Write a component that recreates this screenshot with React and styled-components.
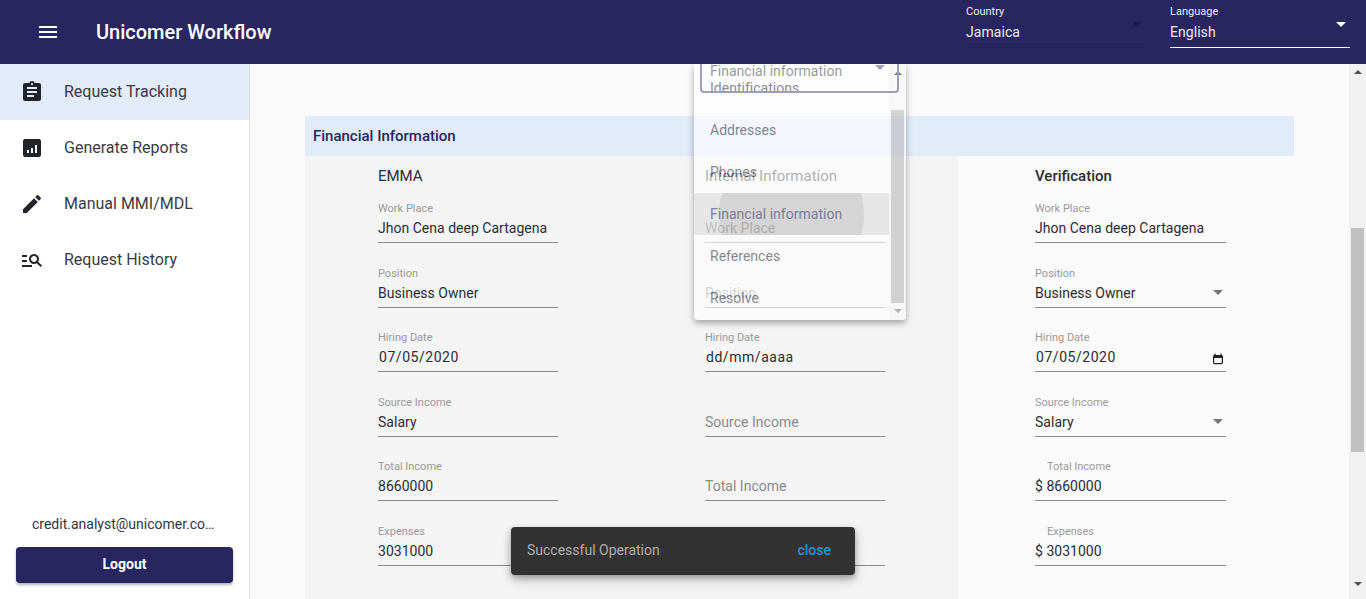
import React from 'react';
import styled, { createGlobalStyle } from 'styled-components';
import { MdAssignment, MdEdit, MdManageSearch, MdMenu } from 'react-icons/md';

const Global = createGlobalStyle`
  html, body { margin: 0; padding: 0; height: 100%; overflow: hidden; }
  body { font-family: Roboto, "Liberation Sans", sans-serif; background: #fafafa; color: rgba(0,0,0,.87); }
  * { box-sizing: border-box; }
`;

const Page = styled.div`position: relative; width: 1366px; height: 599px; display: flex; flex-direction: column; overflow: hidden;`;
const AppBar = styled.header`position: relative; z-index: 5; height: 64px; flex: none; background: #282560; color: #fff; display: flex; align-items: center; padding: 0 16px 0 36px;`;
const MenuButton = styled.span`display: flex; width: 24px; height: 24px; font-size: 24px; margin-right: 36px;`;
const Title = styled.h1`margin: 0; font-size: 20px; font-weight: 500; flex: 1;`;
const HeaderSelect = styled.div`position: relative; width: ${p => p.$w}px; margin-left: ${p => p.$ml}px; height: 48px; margin-top: -17px; border-bottom: 1px ${p => p.$light ? 'solid #fff' : 'dotted #1d1a4e'}; color: #ebebf3;`;
const HeaderLabel = styled.div`font-size: 11px; line-height: 13px; padding-top: 5px;`;
const HeaderValue = styled.div`font-size: 14px; line-height: 20px; margin-top: 4px; letter-spacing: .05px;`;
const Caret = styled.i`
  position: absolute; right: ${p => p.$right}px; top: ${p => p.$top}px; width: 0; height: 0;
  border-left: 5px solid transparent; border-right: 5px solid transparent; border-top: 5px solid ${p => p.$color};
`;

const Body = styled.div`flex: 1; min-height: 0; display: flex;`;
const Sidebar = styled.aside`width: 250px; flex: none; background: #fff; border-right: 1px solid #e0e0e0; display: flex; flex-direction: column;`;
const NavItem = styled.div`height: 56px; display: flex; align-items: center; padding-left: 20px; gap: 20px; font-size: 16px; color: #3a3a44; background: ${p => p.$active ? '#e1ebfa' : 'transparent'}; svg { color: #23232b; flex: none; }`;
const NavText = styled.span`padding-bottom: 2px;`;
const SideFoot = styled.div`margin-top: auto; padding: 0 16px 16px;`;
const Email = styled.div`font-size: 14px; line-height: 20px; color: #33333f; padding: 0 16px; margin-bottom: 13px; white-space: nowrap; overflow: hidden; text-overflow: ellipsis;`;
const Logout = styled.button`display: block; width: 100%; height: 36px; padding: 0 0 2px; border: 0; border-radius: 4px; background: #282560; color: #fff; font: 700 14px Roboto, sans-serif; box-shadow: 0 2px 3px rgba(0,0,0,.3);`;

const Main = styled.main`flex: 1; min-width: 0; padding: 52px 0 0 55px; overflow: hidden; background: #fafafa;`;
const Section = styled.section`width: 989px;`;
const SectionHead = styled.div`height: 40px; background: #e1ebfa; display: flex; align-items: center; padding-left: 8px; font-size: 15px; font-weight: 500; color: #282560;`;
const Columns = styled.div`display: grid; grid-template-columns: 653px 336px;`;
const GrayPanel = styled.div`background: #f4f4f4; display: grid; grid-template-columns: 327px 326px; padding: 0 0 60px 73px;`;
const WhitePanel = styled.div`padding-left: 77px;`;
const Column = styled.div`width: ${p => p.$w}px; display: flex; flex-direction: column; gap: 22.6px;`;
const Heading = styled.div`height: 22px; margin-top: 9px; margin-bottom: -8.6px; font-size: 15px; line-height: 22px; font-weight: ${p => p.$bold ? 500 : 400}; color: #2c2c34;`;
const Field = styled.div`position: relative; height: 42px; border-bottom: 1px solid #8c8c8c;`;
const FieldLabel = styled.div`height: 15px; padding-top: 1px; padding-left: ${p => p.$indent ? 12 : 0}px; font-size: 11px; line-height: 14px; color: #9a9a9a;`;
const FieldValue = styled.div`font-size: 14px; line-height: 20px; margin-top: 2px; white-space: nowrap; letter-spacing: ${p => p.$date ? '.54px' : '.02px'}; padding-left: ${p => p.$date ? 1 : 0}px; color: ${p => p.$muted ? '#8b8b8b' : '#2c2c34'};`;
const CalendarIcon = styled.svg`position: absolute; right: 2px; top: 23px;`;

const Popup = styled.div`position: absolute; z-index: 3; left: 694px; top: 64px; width: 212px; height: 256px; background: #fff; opacity: .62; overflow: hidden; border-radius: 0 0 4px 4px; box-shadow: 0 3px 6px rgba(0,0,0,.55); display: flex;`;
const MenuList = styled.div`width: 195px; flex: none; padding-top: 3px;`;
const MenuItem = styled.div`position: relative; overflow: hidden; height: 42px; display: flex; align-items: center; padding-left: 16px; font-size: 14px; letter-spacing: .02px; color: ${p => p.$active ? '#37376c' : '#46464c'}; background: ${p => p.$active ? 'rgba(0,0,0,.13)' : 'transparent'};`;
const Ripple = styled.span`position: absolute; left: 25px; top: -51px; width: 145px; height: 145px; border-radius: 50%; background: rgba(0,0,0,.12);`;
const MiniBar = styled.div`width: 17px; flex: none; background: #f8f8f8; display: flex; flex-direction: column; align-items: center;`;
const MiniThumb = styled.div`width: 13px; height: 193px; margin-top: 35px; background: #bdbdbd;`;
const OutlineBox = styled.div`position: absolute; left: 6px; top: -20px; width: 199px; height: 49px; border: 2px solid #69659b; border-radius: 4px; padding: 15px 0 0 8px; font-size: 14px; line-height: 20px; letter-spacing: .02px; color: #5f5f66;`;
const Up = styled.i`width: 0; height: 0; border-left: 4px solid transparent; border-right: 4px solid transparent; border-bottom: 4px solid ${p => p.$color}; margin-top: ${p => p.$mt}px;`;
const Down = styled.i`width: 0; height: 0; border-left: 4px solid transparent; border-right: 4px solid transparent; border-top: 4px solid ${p => p.$color}; margin-top: ${p => p.$mt}px;`;

const PageBar = styled.div`width: 17px; flex: none; background: #f1f1f1; display: flex; flex-direction: column; align-items: center; position: relative; z-index: 1;`;
const PageThumb = styled.div`width: 13px; height: 224px; margin-top: 154px; background: #c1c1c1;`;

const Snack = styled.div`position: absolute; z-index: 4; left: 511px; top: 527px; width: 344px; height: 48px; border-radius: 4px; background: #323232; box-shadow: 0 3px 6px rgba(0,0,0,.3), 0 6px 14px rgba(0,0,0,.14); display: flex; align-items: center; justify-content: space-between; padding: 0 24px 2px 16px; font-size: 14px; color: #aeaeae;`;
const SnackAction = styled.span`color: #2196cf; font-weight: 500;`;

const ReportIcon = ({ size }) => (
  <svg width={size} height={size} viewBox="0 0 24 24" fill="currentColor" fillRule="evenodd">
    <path d="M19 3H5c-1.100 0-2 .9-2 2v14c0 1.100.9 2 2 2h14c1.100 0 2-.9 2-2V5c0-1.100-.9-2-2-2zM9 17H7v-3h2v3zm4 0h-2v-5h2v5zm4 0h-2V9h2v8z" />
  </svg>
);

const nav = [
  { label: 'Request Tracking', Icon: MdAssignment, active: true },
  { label: 'Generate Reports', Icon: ReportIcon },
  { label: 'Manual MMI/MDL', Icon: MdEdit },
  { label: 'Request History', Icon: MdManageSearch },
];
const labels = ['Work Place', 'Position', 'Hiring Date', 'Source Income', 'Total Income', 'Expenses'];
const emma = ['Jhon Cena deep Cartagena', 'Business Owner', '07/05/2020', 'Salary', '8660000', '3031000'];
const internal = [null, null, 'dd/mm/aaaa', null, null, null];
const verify = ['Jhon Cena deep Cartagena', 'Business Owner', '07/05/2020', 'Salary', '$ 8660000', '$ 3031000'];
const items = ['Identifications', 'Addresses', 'Phones', 'Financial information', 'References', 'Resolve'];

function Form({ title, values, width, bold, kind }) {
  return (
    <Column $w={width}>
      <Heading $bold={bold}>{title}</Heading>
      {labels.map((l, i) => {
        const value = values[i];
        const placeholder = value === null;
        return (
          <Field key={l}>
            <FieldLabel $indent={kind === 'verify' && i >= 4}>{placeholder ? '\u00a0' : l}</FieldLabel>
            <FieldValue $date={i === 2} $muted={placeholder}>{placeholder ? l : value}</FieldValue>
            {kind === 'verify' && (i === 1 || i === 3) && <Caret $right={3} $top={24} $color="#757575" />}
            {kind === 'verify' && i === 2 && (
              <CalendarIcon width="12" height="12" viewBox="0 0 12 12">
                <path d="M3 .5v1.500M9 .5v1.500" stroke="#222" strokeWidth="1.2" />
                <rect x="1.6" y="2.6" width="8.8" height="8" rx="1" fill="none" stroke="#222" strokeWidth="1.2" />
                <rect x="1.6" y="2.6" width="8.8" height="2.4" fill="#222" />
              </CalendarIcon>
            )}
          </Field>
        );
      })}
    </Column>
  );
}

export default function App() {
  return (
    <Page>
      <Global />
      <AppBar>
        <MenuButton><MdMenu /></MenuButton>
        <Title>Unicomer Workflow</Title>
        <HeaderSelect $w={177}>
          <HeaderLabel>Country</HeaderLabel>
          <HeaderValue>Jamaica</HeaderValue>
          <Caret $right={1} $top={22} $color="#1d1a4e" />
        </HeaderSelect>
        <HeaderSelect $w={180} $ml={27} $light>
          <HeaderLabel>Language</HeaderLabel>
          <HeaderValue>English</HeaderValue>
          <Caret $right={4} $top={22} $color="#fff" />
        </HeaderSelect>
      </AppBar>
      <Body>
        <Sidebar>
          {nav.map(({ label, Icon, active }) => (
            <NavItem key={label} $active={active}><Icon size={24} /><NavText>{label}</NavText></NavItem>
          ))}
          <SideFoot>
            <Email>credit.analyst@unicomer.com</Email>
            <Logout>Logout</Logout>
          </SideFoot>
        </Sidebar>
        <Main>
          <Section>
            <SectionHead>Financial Information</SectionHead>
            <Columns>
              <GrayPanel>
                <Form title="EMMA" values={emma} width={180} />
                <Form title="Internal Information" values={internal} width={180} kind="internal" />
              </GrayPanel>
              <WhitePanel>
                <Form title="Verification" values={verify} width={191} bold kind="verify" />
              </WhitePanel>
            </Columns>
          </Section>
        </Main>
        <PageBar>
          <Up $color="#505050" $mt={6} />
          <PageThumb />
          <Down $color="#505050" $mt={130} />
        </PageBar>
      </Body>
      <Popup>
        <MenuList>
          {items.map((t, i) => (
            <MenuItem key={t} $active={i === 3}>{i === 3 && <Ripple />}{t}</MenuItem>
          ))}
        </MenuList>
        <MiniBar>
          <Up $color="#222" $mt={7} />
          <MiniThumb />
          <Down $color="#888" $mt={6} />
        </MiniBar>
        <OutlineBox>Financial information<Caret $right={12} $top={19} $color="#69659b" /></OutlineBox>
      </Popup>
      <Snack>Successful Operation<SnackAction>close</SnackAction></Snack>
    </Page>
  );
}
